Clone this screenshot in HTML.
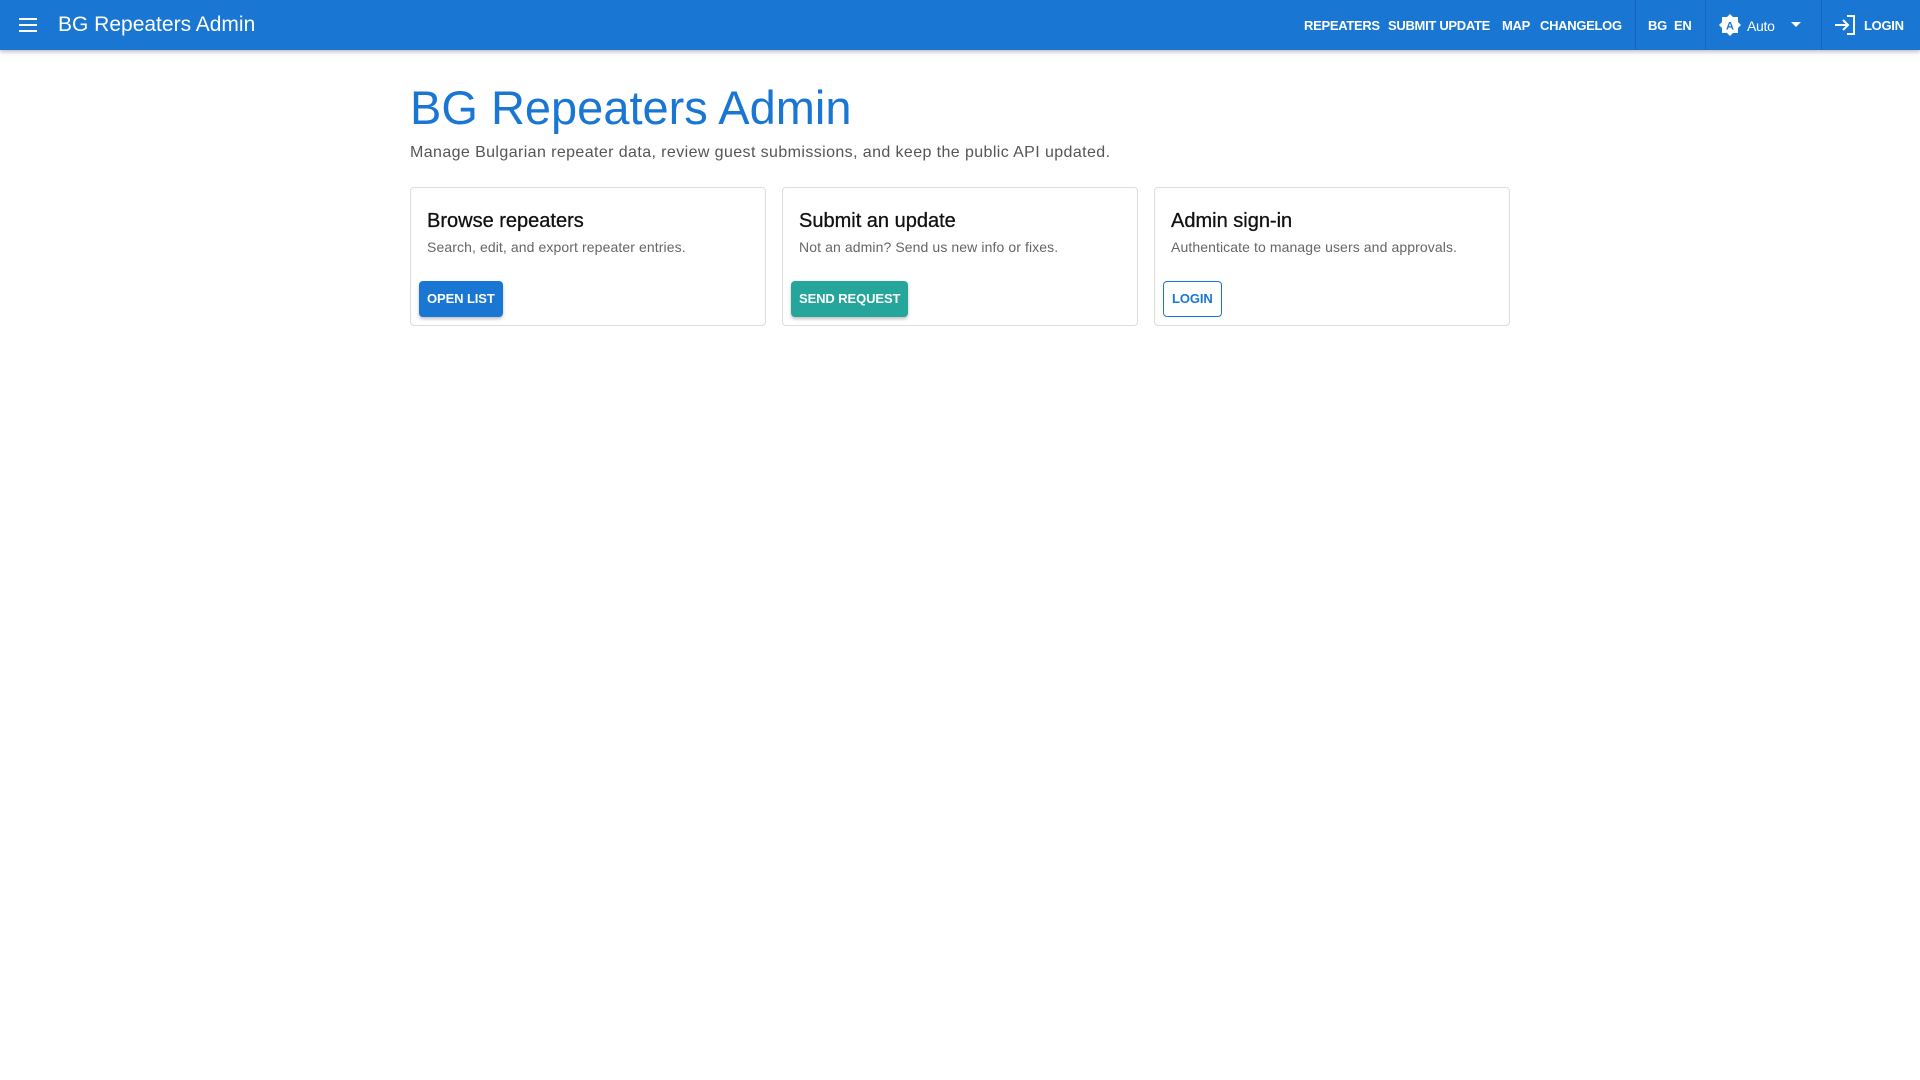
<!DOCTYPE html>
<html><head><meta charset="utf-8"><style>
*{box-sizing:border-box;margin:0;padding:0}
body{width:1920px;height:1080px;background:#fff;font-family:"Liberation Sans",Roboto,sans-serif;position:relative;overflow:hidden}
.hdr{position:absolute;left:0;top:0;width:1920px;height:50px;background:#1976d2;color:#fff;box-shadow:0 2px 4px rgba(0,0,0,.25)}
.hdr .t{position:absolute;left:58px;top:13px;font-size:21px}
.nav{position:absolute;top:18px;font-size:13px;font-weight:bold;letter-spacing:-.3px}
.div{position:absolute;top:0;width:1px;height:50px;background:#1565c0}
h1{position:absolute;left:410px;top:80px;font-size:47px;font-weight:normal;color:#1976d2}
.sub{position:absolute;left:410px;top:144px;font-size:16px;color:#555;letter-spacing:.4px}
.card{position:absolute;top:187px;width:356px;height:139px;border:1px solid #ddd;border-radius:4px}
.card h3{position:absolute;left:16px;top:22px;font-size:20px;font-weight:normal;color:#111;-webkit-text-stroke:.3px #111}
.card p{position:absolute;left:16px;top:51px;font-size:14px;color:#666;letter-spacing:.1px}
.btn{position:absolute;left:8px;top:93px;height:36px;padding:0 8px;line-height:36px;font-size:13px;font-weight:bold;color:#fff;border-radius:4px;box-shadow:0 2px 3px rgba(0,0,0,.25);letter-spacing:-.1px}
</style></head><body>
<div class="hdr">
<svg style="position:absolute;left:18px;top:16px" width="20" height="18" viewBox="0 0 20 18"><path d="M1 3h18M1 9h18M1 15h18" stroke="#fff" stroke-width="2"/></svg>
<div class="t">BG Repeaters Admin</div>
<div class="nav" style="left:1304px">REPEATERS</div>
<div class="nav" style="left:1388px">SUBMIT UPDATE</div>
<div class="nav" style="left:1502px">MAP</div>
<div class="nav" style="left:1540px">CHANGELOG</div>
<div class="div" style="left:1635px"></div>
<div class="nav" style="left:1648px">BG</div>
<div class="nav" style="left:1674px">EN</div>
<div class="div" style="left:1705px"></div>
<svg style="position:absolute;left:1718px;top:13px" width="24" height="24" viewBox="0 0 24 24"><path fill="#fff" d="M12 1l3 3h5v5l3 3-3 3v5h-5l-3 3-3-3H4v-5l-3-3 3-3V4h5z"/><text x="12" y="16.5" font-size="11" font-weight="bold" fill="#1976d2" text-anchor="middle" font-family="Liberation Sans">A</text></svg>
<div class="nav" style="left:1747px;font-weight:normal;font-size:14px">Auto</div>
<svg style="position:absolute;left:1791px;top:22px" width="10" height="6"><path d="M0 0h10L5 5z" fill="#fff"/></svg>
<div class="div" style="left:1821px"></div>
<svg style="position:absolute;left:1834px;top:14px" width="22" height="22" viewBox="0 0 22 22"><path d="M1 11h12M9 6l5 5-5 5M13 2h7v18h-7" stroke="#fff" stroke-width="2" fill="none"/></svg>
<div class="nav" style="left:1864px">LOGIN</div>
</div>
<h1>BG Repeaters Admin</h1>
<div class="sub">Manage Bulgarian repeater data, review guest submissions, and keep the public API updated.</div>
<div class="card" style="left:410px"><h3>Browse repeaters</h3><p>Search, edit, and export repeater entries.</p><div class="btn" style="background:#1976d2">OPEN LIST</div></div>
<div class="card" style="left:782px"><h3>Submit an update</h3><p>Not an admin? Send us new info or fixes.</p><div class="btn" style="background:#26a69a">SEND REQUEST</div></div>
<div class="card" style="left:1154px"><h3>Admin sign-in</h3><p>Authenticate to manage users and approvals.</p><div class="btn" style="background:#fff;color:#1976d2;border:1px solid #1976d2;box-shadow:none;line-height:34px">LOGIN</div></div>
</body></html>
